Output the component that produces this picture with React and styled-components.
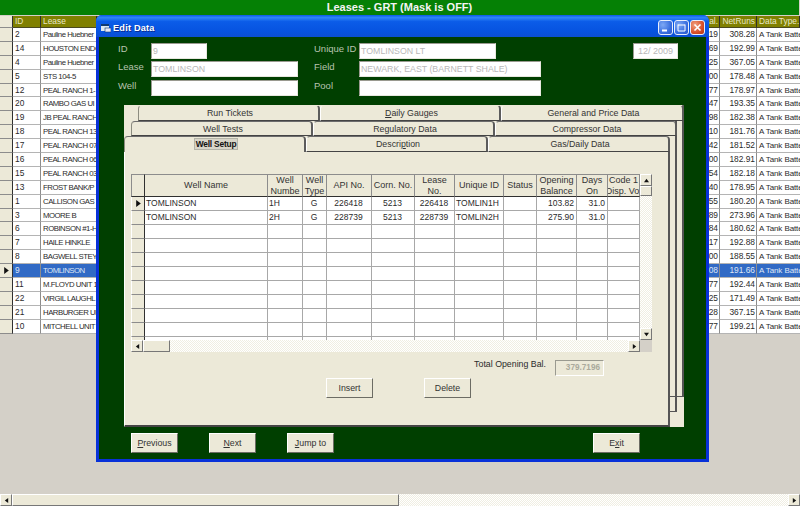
import styled, { createGlobalStyle } from "styled-components"

const CREAM = "#ece9d8"
const INK = "#2b2b2b"
const HATCH = `repeating-conic-gradient(#f0eee2 0 25%, #fff 0 50%) 0 0 / 2px 2px`

const GlobalStyle = createGlobalStyle`
  html, body {
    margin: 0;
    padding: 0;
    background: #d4d0c8;
    overflow: hidden;
  }
  * { box-sizing: border-box; }
  body {
    font-family: "Liberation Sans", Arial, sans-serif;
    font-size: 8.8px;
    color: ${INK};
  }
`

// lease names stop where the Edit Data window covers them
const leases = [
  ["2", "Pauline Huebner", "19", "308.28"],
  ["14", "HOUSTON ENDO", "69", "192.99"],
  ["4", "Pauline Huebner", "25", "367.05"],
  ["5", "STS 104-5", "00", "178.48"],
  ["12", "PEAL RANCH 1-", "77", "178.97"],
  ["20", "RAMBO GAS UI", "47", "193.35"],
  ["19", "JB PEAL RANCH", "98", "182.38"],
  ["18", "PEAL RANCH 13", "10", "181.76"],
  ["17", "PEAL RANCH 07", "42", "181.52"],
  ["16", "PEAL RANCH 06", "00", "182.91"],
  ["15", "PEAL RANCH 03", "54", "182.18"],
  ["13", "FROST BANK/P", "40", "178.95"],
  ["1", "CALLISON GAS", "55", "180.20"],
  ["3", "MOORE B", "89", "273.96"],
  ["6", "ROBINSON #1-H", "84", "180.62"],
  ["7", "HAILE HINKLE", "17", "192.88"],
  ["8", "BAGWELL STEY", "00", "188.55"],
  ["9", "TOMLINSON", "08", "191.66"],
  ["11", "M.FLOYD UNIT 1", "77", "192.44"],
  ["22", "VIRGIL LAUGHL", "25", "171.49"],
  ["21", "HARBURGER UI", "28", "367.15"],
  ["10", "MITCHELL UNIT", "77", "199.21"],
]

const wellCols = [
  { w: 123, title: ["Well Name"], align: "left", vals: ["TOMLINSON", "TOMLINSON"] },
  { w: 35, title: ["Well", "Numbe"], align: "left", vals: ["1H", "2H"] },
  { w: 24, title: ["Well", "Type"], align: "center", vals: ["G", "G"] },
  { w: 45, title: ["API No."], align: "center", vals: ["226418", "228739"] },
  { w: 43, title: ["Corn. No."], align: "center", vals: ["5213", "5213"] },
  { w: 40, title: ["Lease", "No."], align: "center", vals: ["226418", "228739"] },
  { w: 49, title: ["Unique ID"], align: "left", vals: ["TOMLIN1H", "TOMLIN2H"] },
  { w: 33, title: ["Status"], align: "left", vals: ["", ""] },
  { w: 40, title: ["Opening", "Balance"], align: "right", vals: ["103.82", "275.90"] },
  { w: 31, title: ["Days", "On"], align: "right", vals: ["31.0", "31.0"] },
  { w: 32, title: ["Code 1", "Disp. Vol"], align: "center", vals: ["", ""] },
]

const Screen = styled.div`
  position: relative;
  width: 800px;
  height: 506px;
  display: flex;
  flex-direction: column;
  background: #d4d0c8;
`

const AppTitle = styled.div`
  height: 15px;
  line-height: 14px;
  background: #058005;
  color: #f4f4f4;
  font-size: 11px;
  font-weight: bold;
  text-align: center;
  border-right: 1px solid #d4d0c8;
`

const LeaseTable = styled.div`
  flex: 1;
  padding-top: 1px;
  overflow: hidden;
`

const LeaseRow = styled.div`
  display: grid;
  grid-template-columns: 13px 28px 56px 603px 20px 37px 43px;
  height: ${(p) => (p.$head ? "12px" : "13.9px")};
`

const LeaseCell = styled.div`
  line-height: 13px;
  padding: 0 1px 0 2px;
  font-size: 8.4px;
  white-space: nowrap;
  overflow: hidden;
  text-align: ${(p) => p.$align || "left"};
  background: ${(p) => (p.$selected ? "#316ac5" : "#fff")};
  color: ${(p) => (p.$selected ? "#dfe6f5" : INK)};
  border-right: 1px solid #8c8c8c;
  border-bottom: 1px solid #b4b4b4;
`

const LeaseName = styled(LeaseCell)`
  font-size: 7.8px;
  letter-spacing: -0.5px;
  padding-right: 0;
  border-right: none;
`

const DataType = styled(LeaseCell)`
  font-size: 8px;
  letter-spacing: -0.1px;
  border-right: none;
`

const HeadCell = styled.div`
  line-height: 11px;
  padding: 0 1px 0 2px;
  font-size: 8.4px;
  white-space: nowrap;
  overflow: hidden;
  text-align: ${(p) => p.$align || "left"};
  background: #808000;
  color: #e8e8c8;
  border-right: 1px solid #2f2f2f;
  border-bottom: 1px solid #4a4a20;
`

const Indicator = styled.div`
  display: flex;
  align-items: center;
  justify-content: center;
  background: ${CREAM};
  border-right: 1px solid #303030;
  border-bottom: 1px solid #8c8c8c;
`

const Triangle = styled.svg`
  display: block;
  width: ${(p) => p.$size || 5}px;
  height: ${(p) => p.$size || 5}px;
  fill: #111;
`

function Arrow({ dir, size }) {
  const points = {
    right: "1,0 5,3 1,6",
    left: "5,0 1,3 5,6",
    up: "0,5 3,1 6,5",
    down: "0,1 6,1 3,5",
  }
  return (
    <Triangle viewBox="0 0 6 6" $size={size}>
      <polygon points={points[dir]} />
    </Triangle>
  )
}

const HScrollBar = styled.div`
  flex: 0 0 12px;
  display: flex;
  background: ${HATCH};
`

const ScrollButton = styled.div`
  flex: 0 0 auto;
  width: 12px;
  height: ${(p) => p.$height || "auto"};
  display: flex;
  align-items: center;
  justify-content: center;
  background: ${CREAM};
  border: 1px solid;
  border-color: #fff #777 #777 #fff;
`

const Thumb = styled.div`
  flex: 0 0 ${(p) => p.$size}px;
  background: ${CREAM};
  border: 1px solid;
  border-color: #fff #777 #777 #fff;
`

const Spacer = styled.div`
  flex: 1;
`

const Corner = styled.div`
  flex: 0 0 12px;
  background: #d4d0c8;
`

const Window = styled.section`
  position: absolute;
  left: 96px;
  top: 15px;
  width: 613px;
  height: 447px;
  display: flex;
  flex-direction: column;
  background: #0831d9;
  border-radius: 6px 6px 0 0;
  padding: 0 3px 3px;
`

const TitleBar = styled.header`
  height: 22px;
  margin: 0 -3px;
  padding: 3px 4px 0 5px;
  display: flex;
  align-items: center;
  border-radius: 6px 6px 0 0;
  background: linear-gradient(#0a5ae6 0, #2f86f8 12%, #0b5ce8 30%, #0653e0 75%, #0a4fd2 100%);
  color: #fff;
  font-size: 9.2px;
  font-weight: bold;
`

const WindowIcon = styled.svg`
  flex: 0 0 10px;
  margin-right: 2px;
`

const TitleText = styled.span`
  flex: 1;
  letter-spacing: 0.2px;
  text-shadow: 1px 1px 0 #0a2c90;
`

const CaptionButton = styled.div`
  width: 15px;
  height: 15px;
  margin-left: 1px;
  display: flex;
  align-items: center;
  justify-content: center;
  border: 1px solid #e8eefc;
  border-radius: 3px;
  background: ${(p) =>
    p.$close
      ? "radial-gradient(circle at 30% 30%, #f0a080, #d8502a 60%, #b03010)"
      : "radial-gradient(circle at 30% 30%, #7ea8f4, #3a6fe0 60%, #2a54c8)"};
`

const CaptionIcon = styled.svg`
  display: block;
  width: 11px;
  height: 11px;
  fill: none;
  stroke: #fff;
`

const Body = styled.div`
  flex: 1;
  background: #003f00;
  display: flex;
  flex-direction: column;
`

const FormGrid = styled.div`
  display: grid;
  grid-template-columns: 33px 163px 45px 274px 45px;
  grid-template-rows: 18px 19px 16px;
  padding: 6px 0 0 19px;
  height: 59px;
`

const FieldLabel = styled.label`
  color: #b8c4b0;
  font-size: 9.5px;
  line-height: 11px;
`

const TextBox = styled.div`
  width: ${(p) => p.$w}px;
  height: 16px;
  line-height: 15px;
  padding-left: 1px;
  background: #fff;
  color: #b8b8b8;
  border: 1px solid;
  border-color: #9a9a90 #e8e8e0 #e8e8e0 #9a9a90;
  white-space: nowrap;
  overflow: hidden;
`

const DateBox = styled(TextBox)`
  font-size: 9px;
  text-align: center;
  padding-left: 0;
`

const TabControl = styled.div`
  position: relative;
  width: 560px;
  height: 322px;
  margin: 9px 0 0 25px;
  background: ${CREAM};
  display: flex;
  flex-direction: column;
`

const BackEdge = styled.div`
  position: absolute;
  top: ${(p) => p.$top}px;
  left: 0;
  right: ${(p) => p.$right}px;
  height: ${(p) => p.$height}px;
  border-right: 2px solid #555;
  border-bottom: 1px solid #555;
`

const TabRow = styled.div`
  position: relative;
  display: flex;
  padding-left: ${(p) => p.$inset}px;
  height: ${(p) => p.$height}px;
`

const Tab = styled.div`
  flex: 0 0 ${(p) => p.$w || 182}px;
  display: flex;
  align-items: center;
  justify-content: center;
  padding-left: 3px;
  background: ${CREAM};
  color: #333;
  border-radius: 4px 4px 0 0;
  border-left: 1px solid ${(p) => (p.$first ? "#8c8c80" : "#fff")};
  border-right: 2px solid #5c5c5c;
  border-top: 1px solid ${(p) => (p.$top ? "transparent" : "#6c6c6c")};
  border-bottom: ${(p) => (p.$active ? "none" : "1px solid #444")};
`

const ActiveLabel = styled.span`
  font-size: 8.4px;
  letter-spacing: -0.2px;
  font-weight: bold;
  color: #111;
  background: #d8d5c8;
  border: 1px solid #b4b4a8;
  padding: 0 1px;
  line-height: 10px;
  margin-top: -2px;
`

const Page = styled.div`
  position: relative;
  width: 546px;
  height: 275px;
  padding: 22px 0 0 7px;
  background: ${CREAM};
  border-left: 1px solid #fff;
  border-right: 2px solid #555;
  border-bottom: 2px solid #444;
`

const WellGrid = styled.div`
  width: 521px;
  height: 178px;
  display: flex;
  flex-direction: column;
  margin-left: -1px;
`

const WellGridTop = styled.div`
  height: 166px;
  display: flex;
`

const WellTable = styled.div`
  flex: 1;
  overflow: hidden;
  background: #fff;
`

const WellRow = styled.div`
  display: flex;
  height: ${(p) => (p.$head ? 23 : 14)}px;
`

const RowMarker = styled.div`
  flex: 0 0 14px;
  display: flex;
  align-items: center;
  justify-content: center;
  background: ${CREAM};
  border-right: 1px solid #303030;
  border-bottom: 1px solid ${(p) => (p.$head ? "#303030" : "#8c8c8c")};
  border-top: ${(p) => (p.$head ? "1px solid #8c8c8c" : "none")};
  border-left: 1px solid ${(p) => (p.$head ? "#8c8c8c" : "#fff")};
`

const ColHead = styled.div`
  flex: 0 0 ${(p) => p.$w}px;
  display: flex;
  flex-direction: column;
  align-items: center;
  justify-content: center;
  overflow: hidden;
  white-space: nowrap;
  font-size: 9px;
  line-height: 10.5px;
  background: ${CREAM};
  color: #333;
  border-top: 1px solid #8c8c8c;
  border-right: 1px solid #8c8c8c;
  border-bottom: 1px solid #303030;
`

const WellCell = styled.div`
  flex: 0 0 ${(p) => p.$w}px;
  line-height: 13px;
  font-size: 8.5px;
  padding: 0 2px 0 1px;
  white-space: nowrap;
  overflow: hidden;
  text-align: ${(p) => p.$align};
  border-right: 1px solid #a8a8a8;
  border-bottom: 1px solid #a8a8a8;
`

const VScrollBar = styled.div`
  flex: 0 0 12px;
  display: flex;
  flex-direction: column;
  background: ${HATCH};
`

const VThumb = styled.div`
  height: 10px;
  background: ${CREAM};
  border: 1px solid;
  border-color: #fff #777 #777 #fff;
`

const TotalRow = styled.div`
  display: flex;
  align-items: flex-start;
  justify-content: flex-end;
  gap: 9px;
  height: 16px;
  margin-top: 8px;
  padding-right: 64px;
`

const TotalLabel = styled.span`
  line-height: 9px;
`

const TotalBox = styled.div`
  width: 49px;
  height: 16px;
  line-height: 14px;
  text-align: right;
  padding-right: 3px;
  font-size: 8.2px;
  font-weight: bold;
  background: ${CREAM};
  color: #aaa99c;
  border: 1px solid;
  border-color: #9a9a90 #fff #fff #9a9a90;
`

const PageActions = styled.div`
  display: flex;
  gap: 51px;
  margin: 2px 0 0 194px;
`

const Button = styled.button`
  width: 47px;
  height: 20px;
  padding: 0;
  font: inherit;
  color: #333;
  background: ${CREAM};
  border: 1px solid;
  border-color: #fff #6c6c64 #6c6c64 #fff;
`

const BottomBar = styled.div`
  display: flex;
  gap: 31px;
  margin-top: 6px;
  padding: 0 66px 0 32px;
`

const ExitButton = styled(Button)`
  margin-left: auto;
`

export default function App() {
  return (
    <Screen>
      <GlobalStyle />
      <AppTitle>Leases - GRT (Mask is OFF)</AppTitle>
      <LeaseTable>
        <LeaseRow $head>
          <Indicator />
          <HeadCell>ID</HeadCell>
          <HeadCell>Lease</HeadCell>
          <HeadCell />
          <HeadCell $align="right">al.</HeadCell>
          <HeadCell $align="right">NetRuns</HeadCell>
          <HeadCell>Data Type.</HeadCell>
        </LeaseRow>
        {leases.map(([id, name, bal, net]) => {
          const selected = id === "9"
          return (
            <LeaseRow key={id}>
              <Indicator>{selected && <Arrow dir="right" size={7} />}</Indicator>
              <LeaseCell $selected={selected}>{id}</LeaseCell>
              <LeaseName $selected={selected}>{name}</LeaseName>
              <LeaseCell $selected={selected} />
              <LeaseCell $selected={selected} $align="right">{bal}</LeaseCell>
              <LeaseCell $selected={selected} $align="right">{net}</LeaseCell>
              <DataType $selected={selected}>A Tank Batte</DataType>
            </LeaseRow>
          )
        })}
      </LeaseTable>
      <HScrollBar>
        <ScrollButton><Arrow dir="left" /></ScrollButton>
        <Thumb $size={387} />
        <Spacer />
        <ScrollButton><Arrow dir="right" /></ScrollButton>
      </HScrollBar>

      <Window>
        <TitleBar>
          <WindowIcon width="10" height="10" viewBox="0 0 10 10">
            <rect x="0" y="1" width="8" height="7" fill="#dfe8f0" />
            <rect x="0" y="1" width="8" height="2" fill="#123a70" />
            <rect x="4" y="5" width="6" height="4" fill="#e8e8f8" stroke="#123a70" strokeWidth="0.6" />
          </WindowIcon>
          <TitleText>Edit Data</TitleText>
          <CaptionButton>
            <CaptionIcon viewBox="0 0 11 11"><path d="M2 8.5h5" strokeWidth="2" /></CaptionIcon>
          </CaptionButton>
          <CaptionButton>
            <CaptionIcon viewBox="0 0 11 11"><path d="M2 3h7M2 2.5v6.5h7V2.5" strokeWidth="1" /></CaptionIcon>
          </CaptionButton>
          <CaptionButton $close>
            <CaptionIcon viewBox="0 0 11 11"><path d="M2.5 2.5l6 6M8.5 2.5l-6 6" strokeWidth="1.6" /></CaptionIcon>
          </CaptionButton>
        </TitleBar>
        <Body>
          <FormGrid>
            <FieldLabel>ID</FieldLabel>
            <TextBox $w={56}>9</TextBox>
            <FieldLabel>Unique ID</FieldLabel>
            <TextBox $w={137}>TOMLINSON LT</TextBox>
            <DateBox $w={45}>12/ 2009</DateBox>
            <FieldLabel>Lease</FieldLabel>
            <TextBox $w={147}>TOMLINSON</TextBox>
            <FieldLabel>Field</FieldLabel>
            <TextBox $w={182}>NEWARK, EAST (BARNETT SHALE)</TextBox>
            <span />
            <FieldLabel>Well</FieldLabel>
            <TextBox $w={147} />
            <FieldLabel>Pool</FieldLabel>
            <TextBox $w={182} />
          </FormGrid>

          <TabControl>
            <BackEdge $top={16} $right={7} $height={291} />
            <BackEdge $top={0} $right={0} $height={292} />
            <TabRow $inset={14} $height={16}>
              <Tab $top $first>Run Tickets</Tab>
              <Tab $top $w={181}><span><u>D</u>aily Gauges</span></Tab>
              <Tab $top $w={183}>General and Price Data</Tab>
            </TabRow>
            <TabRow $inset={7} $height={15}>
              <Tab $first>Well Tests</Tab>
              <Tab>Regulatory Data</Tab>
              <Tab>Compressor Data</Tab>
            </TabRow>
            <TabRow $inset={0} $height={16}>
              <Tab $first $active><ActiveLabel>Well Setup</ActiveLabel></Tab>
              <Tab><span>Descri<u>p</u>tion</span></Tab>
              <Tab>Gas/Daily Data</Tab>
            </TabRow>
            <Page>
              <WellGrid>
                <WellGridTop>
                  <WellTable>
                    <WellRow $head>
                      <RowMarker $head />
                      {wellCols.map((col) => (
                        <ColHead key={col.title.join()} $w={col.w}>
                          {col.title.map((line) => <span key={line}>{line}</span>)}
                        </ColHead>
                      ))}
                    </WellRow>
                    {Array.from({ length: 11 }).map((_, row) => (
                      <WellRow key={row}>
                        <RowMarker>{row === 0 && <Arrow dir="right" size={7} />}</RowMarker>
                        {wellCols.map((col) => (
                          <WellCell key={col.title.join()} $w={col.w} $align={col.align}>
                            {col.vals[row] || ""}
                          </WellCell>
                        ))}
                      </WellRow>
                    ))}
                  </WellTable>
                  <VScrollBar>
                    <ScrollButton $height="12px"><Arrow dir="up" /></ScrollButton>
                    <VThumb />
                    <Spacer />
                    <ScrollButton $height="12px"><Arrow dir="down" /></ScrollButton>
                  </VScrollBar>
                </WellGridTop>
                <HScrollBar>
                  <ScrollButton><Arrow dir="left" /></ScrollButton>
                  <Thumb $size={27} />
                  <Spacer />
                  <ScrollButton><Arrow dir="right" /></ScrollButton>
                  <Corner />
                </HScrollBar>
              </WellGrid>
              <TotalRow>
                <TotalLabel>Total Opening Bal.</TotalLabel>
                <TotalBox>379.7196</TotalBox>
              </TotalRow>
              <PageActions>
                <Button>Insert</Button>
                <Button>Delete</Button>
              </PageActions>
            </Page>
          </TabControl>

          <BottomBar>
            <Button><u>P</u>revious</Button>
            <Button><u>N</u>ext</Button>
            <Button><u>J</u>ump to</Button>
            <ExitButton>E<u>x</u>it</ExitButton>
          </BottomBar>
        </Body>
      </Window>
    </Screen>
  )
}
